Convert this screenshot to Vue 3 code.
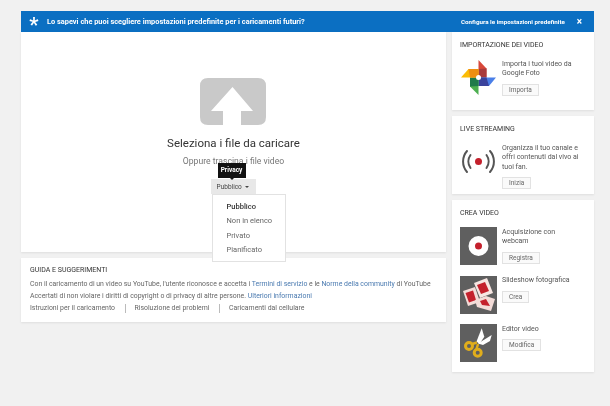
<script setup>
const links = ['Istruzioni per il caricamento', 'Risoluzione dei problemi', 'Caricamenti dal cellulare']
const options = ['Pubblico', 'Non in elenco', 'Privato', 'Pianificato']
</script>

<template>
  <div class="page">
    <header class="banner">
      <span class="star">*</span>
      <span class="banner-text">Lo sapevi che puoi scegliere impostazioni predefinite per i caricamenti futuri?</span>
      <span class="banner-link">Configura le impostazioni predefinite</span>
      <span class="banner-close">×</span>
    </header>
    <div class="columns">
      <main class="main-col">
        <section class="upload card">
          <svg class="upload-icon" width="68" height="47" viewBox="0 0 68 47">
            <path d="M9 0H59Q67 0 67 8V39Q67 47 59 47H42V33H54L33.500 9L12 33H24V47H9Q1 47 1 39V8Q1 0 9 0Z" fill="#c9c9c9" />
          </svg>
          <h1>Seleziona i file da caricare</h1>
          <p class="drag">Oppure trascina i file video</p>
          <div class="privacy">
            <span class="tip">Privacy</span>
            <button class="privacy-btn">Pubblico <i class="caret"></i></button>
            <ul class="menu">
              <li v-for="(o, i) in options" :key="o" :class="{ active: i === 0 }">{{ o }}</li>
            </ul>
          </div>
        </section>
        <section class="help card">
          <h2>GUIDA E SUGGERIMENTI</h2>
          <p>Con il caricamento di un video su YouTube, l'utente riconosce e accetta i <a>Termini di servizio</a> e le <a>Norme della community</a> di YouTube<br />Accertati di non violare i diritti di copyright o di privacy di altre persone. <a>Ulteriori informazioni</a></p>
          <div class="help-links">
            <span v-for="l in links" :key="l">{{ l }}</span>
          </div>
        </section>
      </main>
      <aside class="side-col">
        <section class="card side-card import">
          <h2>IMPORTAZIONE DEI VIDEO</h2>
          <div class="row">
            <svg class="thumb" width="37" height="37" viewBox="0 0 37 37">
              <path d="M18.500 1L26.500 9.500V18.500H18.500Z" fill="#d8483a" />
              <path d="M18.500 10L26.500 9.500V18.500H18.500Z" fill="#a83a3c" />
              <path d="M36 18.500L29 27H18.500V18.500Z" fill="#4a7fe8" />
              <path d="M26.500 18.500L29 27H18.500V18.500Z" fill="#3a429c" />
              <path d="M18.500 36L10 27.500V18.500H18.500Z" fill="#4daf50" />
              <path d="M18.500 27L10 27.500V18.500H18.500Z" fill="#1f7a4a" />
              <path d="M1 18.500L8.500 10H18.500V18.500Z" fill="#fbbc05" />
              <path d="M10 18.500L8.500 10H18.500V18.500Z" fill="#ef8f12" />
              <circle cx="18.500" cy="18.500" r="2.500" fill="#fff" />
            </svg>
            <div class="info">
              <p>Importa i tuoi video da Google Foto</p>
              <button>Importa</button>
            </div>
          </div>
        </section>
        <section class="card side-card live">
          <h2>LIVE STREAMING</h2>
          <div class="row">
            <svg class="thumb" width="37" height="37" viewBox="0 0 37 37">
              <circle cx="18.500" cy="18.500" r="3.500" fill="#c4202c" />
              <path d="M10.500 12A11 11 0 0 0 10.500 25M26.500 12A11 11 0 0 1 26.500 25" fill="none" stroke="#555" stroke-width="2" stroke-linecap="round" />
              <path d="M7 8A16 16 0 0 0 7 29M30 8A16 16 0 0 1 30 29" fill="none" stroke="#555" stroke-width="2" stroke-linecap="round" />
            </svg>
            <div class="info">
              <p>Organizza il tuo canale e offri contenuti dal vivo ai tuoi fan.</p>
              <button>Inizia</button>
            </div>
          </div>
        </section>
        <section class="card side-card crea">
          <h2>CREA VIDEO</h2>
          <div class="row">
            <svg class="thumb" width="37" height="38" viewBox="0 0 37 38">
              <rect width="37" height="38" fill="#5f5f5f" />
              <circle cx="18.500" cy="19" r="10" fill="#fff" />
              <circle cx="18.500" cy="19" r="3.500" fill="#c4202c" />
            </svg>
            <div class="info">
              <p>Acquisizione con webcam</p>
              <button>Registra</button>
            </div>
          </div>
          <div class="row">
            <svg class="thumb" width="37" height="38" viewBox="0 0 37 38">
              <rect width="37" height="38" fill="#5f5f5f" />
              <path d="M3 15L15 11L20 26L8 30Z" fill="#f3dcd8" />
              <path d="M5.500 17L13 14.500L16 24L9 26.500Z" fill="#c4202c" />
              <path d="M14 7L27 2L33 17L20 22Z" fill="#f7e6e2" />
              <path d="M17 9L25 6L29 15L21 18Z" fill="#c4202c" />
              <path d="M15 24L26 20L35 23L31 35L17 31Z" fill="#f3dcd8" />
              <path d="M20 25L26 23L30 30L22 29Z" fill="#c4202c" />
            </svg>
            <div class="info">
              <p>Slideshow fotografica</p>
              <button>Crea</button>
            </div>
          </div>
          <div class="row">
            <svg class="thumb" width="37" height="38" viewBox="0 0 37 38">
              <rect width="37" height="38" fill="#5f5f5f" />
              <path d="M16.500 17.500L21.700 4.300L24.300 12.700L19.500 20Z" fill="#fff" />
              <path d="M18 19.600L31.700 11L30 17L23 21Z" fill="#fff" />
              <g fill="none" stroke="#e0ad1c" stroke-width="3">
                <circle cx="9" cy="22" r="3.500" />
                <circle cx="17.700" cy="28.700" r="3.500" />
              </g>
              <path d="M12 20L17 18.500M16.500 25L18 20" stroke="#e0ad1c" stroke-width="2.500" />
            </svg>
            <div class="info">
              <p>Editor video</p>
              <button>Modifica</button>
            </div>
          </div>
        </section>
      </aside>
    </div>
  </div>
</template>

<style>
html, body { margin: 0; background: #f1f1f1; }
</style>

<style scoped>
.page {
  box-sizing: border-box;
  width: 610px;
  height: 406px;
  overflow: hidden;
  padding: 11px 16px 0 21px;
  background: #f1f1f1;
  font-family: Roboto, "Liberation Sans", sans-serif;
  color: #444;
  filter: blur(0.35px);
}
.banner {
  height: 21px;
  display: flex;
  align-items: center;
  background: #0b6fc2;
  color: #fff;
  font-weight: 700;
}
.star { width: 26px; text-align: center; font-size: 21px; line-height: 28px; height: 21px; font-weight: 500; }
.banner-text { flex: 1; font-size: 7.400px; }
.banner-link { font-size: 6.250px; }
.banner-close { width: 29px; text-align: center; font-size: 10px; }
.columns { display: flex; gap: 6px; align-items: flex-start; }
.main-col { width: 425px; display: flex; flex-direction: column; gap: 6px; }
.side-col { width: 142px; display: flex; flex-direction: column; gap: 6px; }
.card { background: #fff; box-shadow: 0 1px 2px rgba(0, 0, 0, 0.08); }
.upload {
  height: 220px;
  display: flex;
  flex-direction: column;
  align-items: center;
  box-sizing: border-box;
  padding-top: 46px;
}
.upload-icon { display: block; margin-left: -1px; flex: none; }
h1 { margin: 9px 0 0; font-size: 11.500px; line-height: 18px; font-weight: 400; color: #333; }
.drag { margin: 3px 0 0; font-size: 8.650px; line-height: 12px; color: #777; }
.privacy { position: relative; margin-top: 12px; margin-left: -1px; }
.privacy-btn {
  display: block;
  width: 45px;
  height: 15px;
  padding: 0;
  border: 0;
  background: #e8e8e8;
  font: 6.500px Roboto, sans-serif;
  color: #444;
}
.caret {
  display: inline-block;
  margin-left: 2px;
  vertical-align: 1px;
  border: 2.500px solid transparent;
  border-top-color: #444;
  border-bottom: 0;
}
.tip {
  position: absolute;
  left: 7px;
  top: -16px;
  width: 28px;
  height: 15px;
  background: #111;
  color: #fff;
  font-size: 6.500px;
  font-weight: 700;
  line-height: 14px;
  text-align: center;
}
.tip::after {
  content: "";
  position: absolute;
  left: 11px;
  top: 14px;
  border: 3px solid transparent;
  border-top-color: #111;
  border-bottom: 0;
}
.menu {
  position: absolute;
  z-index: 2;
  left: 1px;
  top: 15px;
  box-sizing: border-box;
  width: 74px;
  height: 68px;
  margin: 0;
  padding: 4.500px 0 0 14px;
  list-style: none;
  background: #fff;
  border: 1px solid #e2e2e2;
  font-size: 7.500px;
  line-height: 14.500px;
  color: #666;
}
.menu .active { color: #333; font-weight: 500; }
.help { height: 64px; box-sizing: border-box; padding: 7px 9px; }
h2 { margin: 0; font-size: 7px; line-height: 10px; font-weight: 400; color: #333; }
.help p { margin: 4px 0 0; font-size: 6.900px; line-height: 11.500px; color: #666; white-space: nowrap; }
.help a { color: #4a7ab0; }
.help-links { display: flex; margin-top: 2px; font-size: 6.900px; line-height: 9px; color: #666; }
.help-links span { padding-right: 9.500px; margin-right: 9px; border-right: 1px solid #bbb; }
.help-links span:last-child { border: 0; }
.side-card { box-sizing: border-box; padding: 8px 8px 0; }
.import { height: 78px; }
.live { height: 78px; }
.crea { height: 172px; }
.row { display: flex; gap: 5px; margin-top: 9px; }
.crea .row + .row { margin-top: 10.500px; }
.thumb { flex: none; display: block; }
.info { width: 78px; padding-top: 0.500px; }
.info p { margin: 0; font-size: 7px; line-height: 9.500px; color: #555; }
.info button {
  display: block;
  margin-top: 5px;
  height: 12px;
  padding: 0 6px;
  border: 1px solid #e2e2e2;
  background: #fafafa;
  font: 6.500px Roboto, sans-serif;
  color: #666;
}
</style>
